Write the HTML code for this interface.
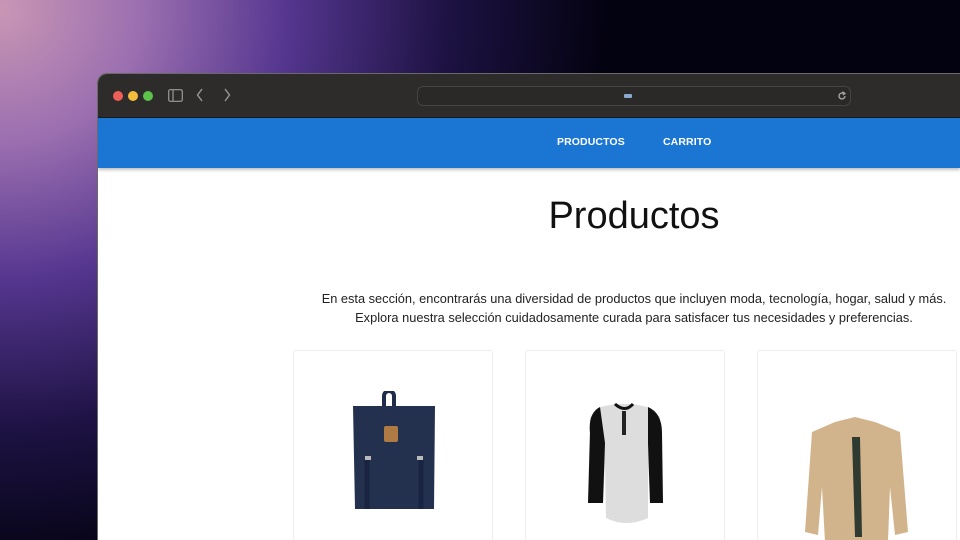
<!DOCTYPE html>
<html><head><meta charset="utf-8"><style>
*{margin:0;padding:0;box-sizing:border-box}
html,body{width:960px;height:540px;overflow:hidden}
body{position:relative;font-family:"Liberation Sans",sans-serif;
background:radial-gradient(ellipse 640px 600px at 0px 10px,#c996b4 0%,#9b6fb0 22%,#55368f 45%,#1d1243 70%,#030210 95%);}
.win{position:absolute;left:97px;top:73px;width:863px;height:467px;background:#fff;border-radius:10px 0 0 0;border:1px solid #6a6a6a;border-bottom:none;border-right:none;overflow:hidden}
.bar{height:44px;background:#2d2c2a;border-bottom:1px solid #1a1a1a;position:relative}
.dot{position:absolute;top:17px;width:10px;height:10px;border-radius:50%}
.url{position:absolute;left:319px;top:12px;width:434px;height:20px;border:1px solid #444;border-radius:6px;background:#2a2928}
.nav{height:50px;background:#1a76d2;position:relative;box-shadow:0 2px 3px rgba(0,0,0,.25)}
.nav span{position:absolute;top:18px;color:#fff;font-weight:bold;font-size:10.5px;letter-spacing:.1px}
h1{position:absolute;left:0;width:1072px;text-align:center;top:121px;font-weight:normal;font-size:38px;color:#111}
p{position:absolute;left:0;width:1072px;text-align:center;top:215px;font-size:12.8px;line-height:19px;color:#222}
.card{position:absolute;top:276px;width:200px;height:191px;border:1px solid #eee;border-bottom:none;border-radius:3px 3px 0 0;overflow:hidden}
</style></head><body>
<div class="win">
 <div class="bar">
  <div class="dot" style="left:15px;background:#ee5f57"></div>
  <div class="dot" style="left:30px;background:#f5bd3d"></div>
  <div class="dot" style="left:45px;background:#5cc24a"></div>
  <svg style="position:absolute;left:70px;top:15px" width="15" height="13" viewBox="0 0 15 13"><rect x="0.7" y="0.7" width="13.6" height="11.6" rx="1.5" fill="none" stroke="#999" stroke-width="1.2"/><line x1="5" y1="1" x2="5" y2="12" stroke="#999" stroke-width="1.2"/></svg>
  <svg style="position:absolute;left:98px;top:14px" width="8" height="14"><path d="M6 1L1.5 7L6 13" fill="none" stroke="#999" stroke-width="1.4"/></svg>
  <svg style="position:absolute;left:125px;top:14px" width="8" height="14"><path d="M2 1L6.5 7L2 13" fill="none" stroke="#999" stroke-width="1.4"/></svg>
  <div class="url"><div style="position:absolute;left:206px;top:7px;width:8px;height:4px;background:#8aa8d0;border-radius:1px"></div>
   <svg style="position:absolute;left:419px;top:4px" width="10" height="10"><path d="M8 5A3 3 0 1 1 6.5 2.4" fill="none" stroke="#aaa" stroke-width="1.3"/><path d="M5.5 0.8L8 2.5L5.8 4" fill="none" stroke="#aaa" stroke-width="1.2"/></svg></div>
 </div>
 <div class="nav"><span style="left:459px">PRODUCTOS</span><span style="left:565px">CARRITO</span></div>
 <h1>Productos</h1>
 <p>En esta sección, encontrarás una diversidad de productos que incluyen moda, tecnología, hogar, salud y más.<br>Explora nuestra selección cuidadosamente curada para satisfacer tus necesidades y preferencias.</p>
 <div class="card" style="left:195px">
  <svg style="position:absolute;left:55px;top:40px" width="90" height="125" viewBox="0 0 90 125"><path d="M35 15V5a5 5 0 0 1 10 0v10" fill="none" stroke="#1f2d4a" stroke-width="4"/><path d="M4 15H86L85 118H6Z" fill="#23314f"/><rect x="35" y="35" width="14" height="16" rx="2" fill="#b07a45"/><path d="M18 68V118M72 68V118" stroke="#182440" stroke-width="5"/><rect x="16" y="65" width="6" height="4" fill="#bbb"/><rect x="68" y="65" width="6" height="4" fill="#bbb"/></svg>
 </div>
 <div class="card" style="left:427px">
  <svg style="position:absolute;left:52px;top:52px" width="95" height="125" viewBox="0 0 95 125"><path d="M22 4L37 1L55 1L70 4L82 14L85 100L72 100L70 60L70 115Q48 125 28 115L27 60L25 100L10 100L12 14Z" fill="#ddd"/><path d="M22 4Q10 10 12 30L10 100L25 100L27 40ZM70 4Q84 10 84 30L85 100L72 100L70 40Z" fill="#111"/><path d="M37 1Q47 10 55 1" fill="none" stroke="#111" stroke-width="3"/><rect x="44" y="8" width="4" height="24" fill="#222"/></svg>
 </div>
 <div class="card" style="left:659px">
  <svg style="position:absolute;left:42px;top:66px" width="115" height="125" viewBox="0 0 115 125"><path d="M35 5L55 0L75 5L100 15L108 115L95 118L90 70L88 125L25 125L22 70L18 118L5 115L12 15Z" fill="#d2b48c"/><path d="M52 20L60 20L62 120L55 120Z" fill="#2f3a30"/></svg>
 </div>
</div>
</body></html>
